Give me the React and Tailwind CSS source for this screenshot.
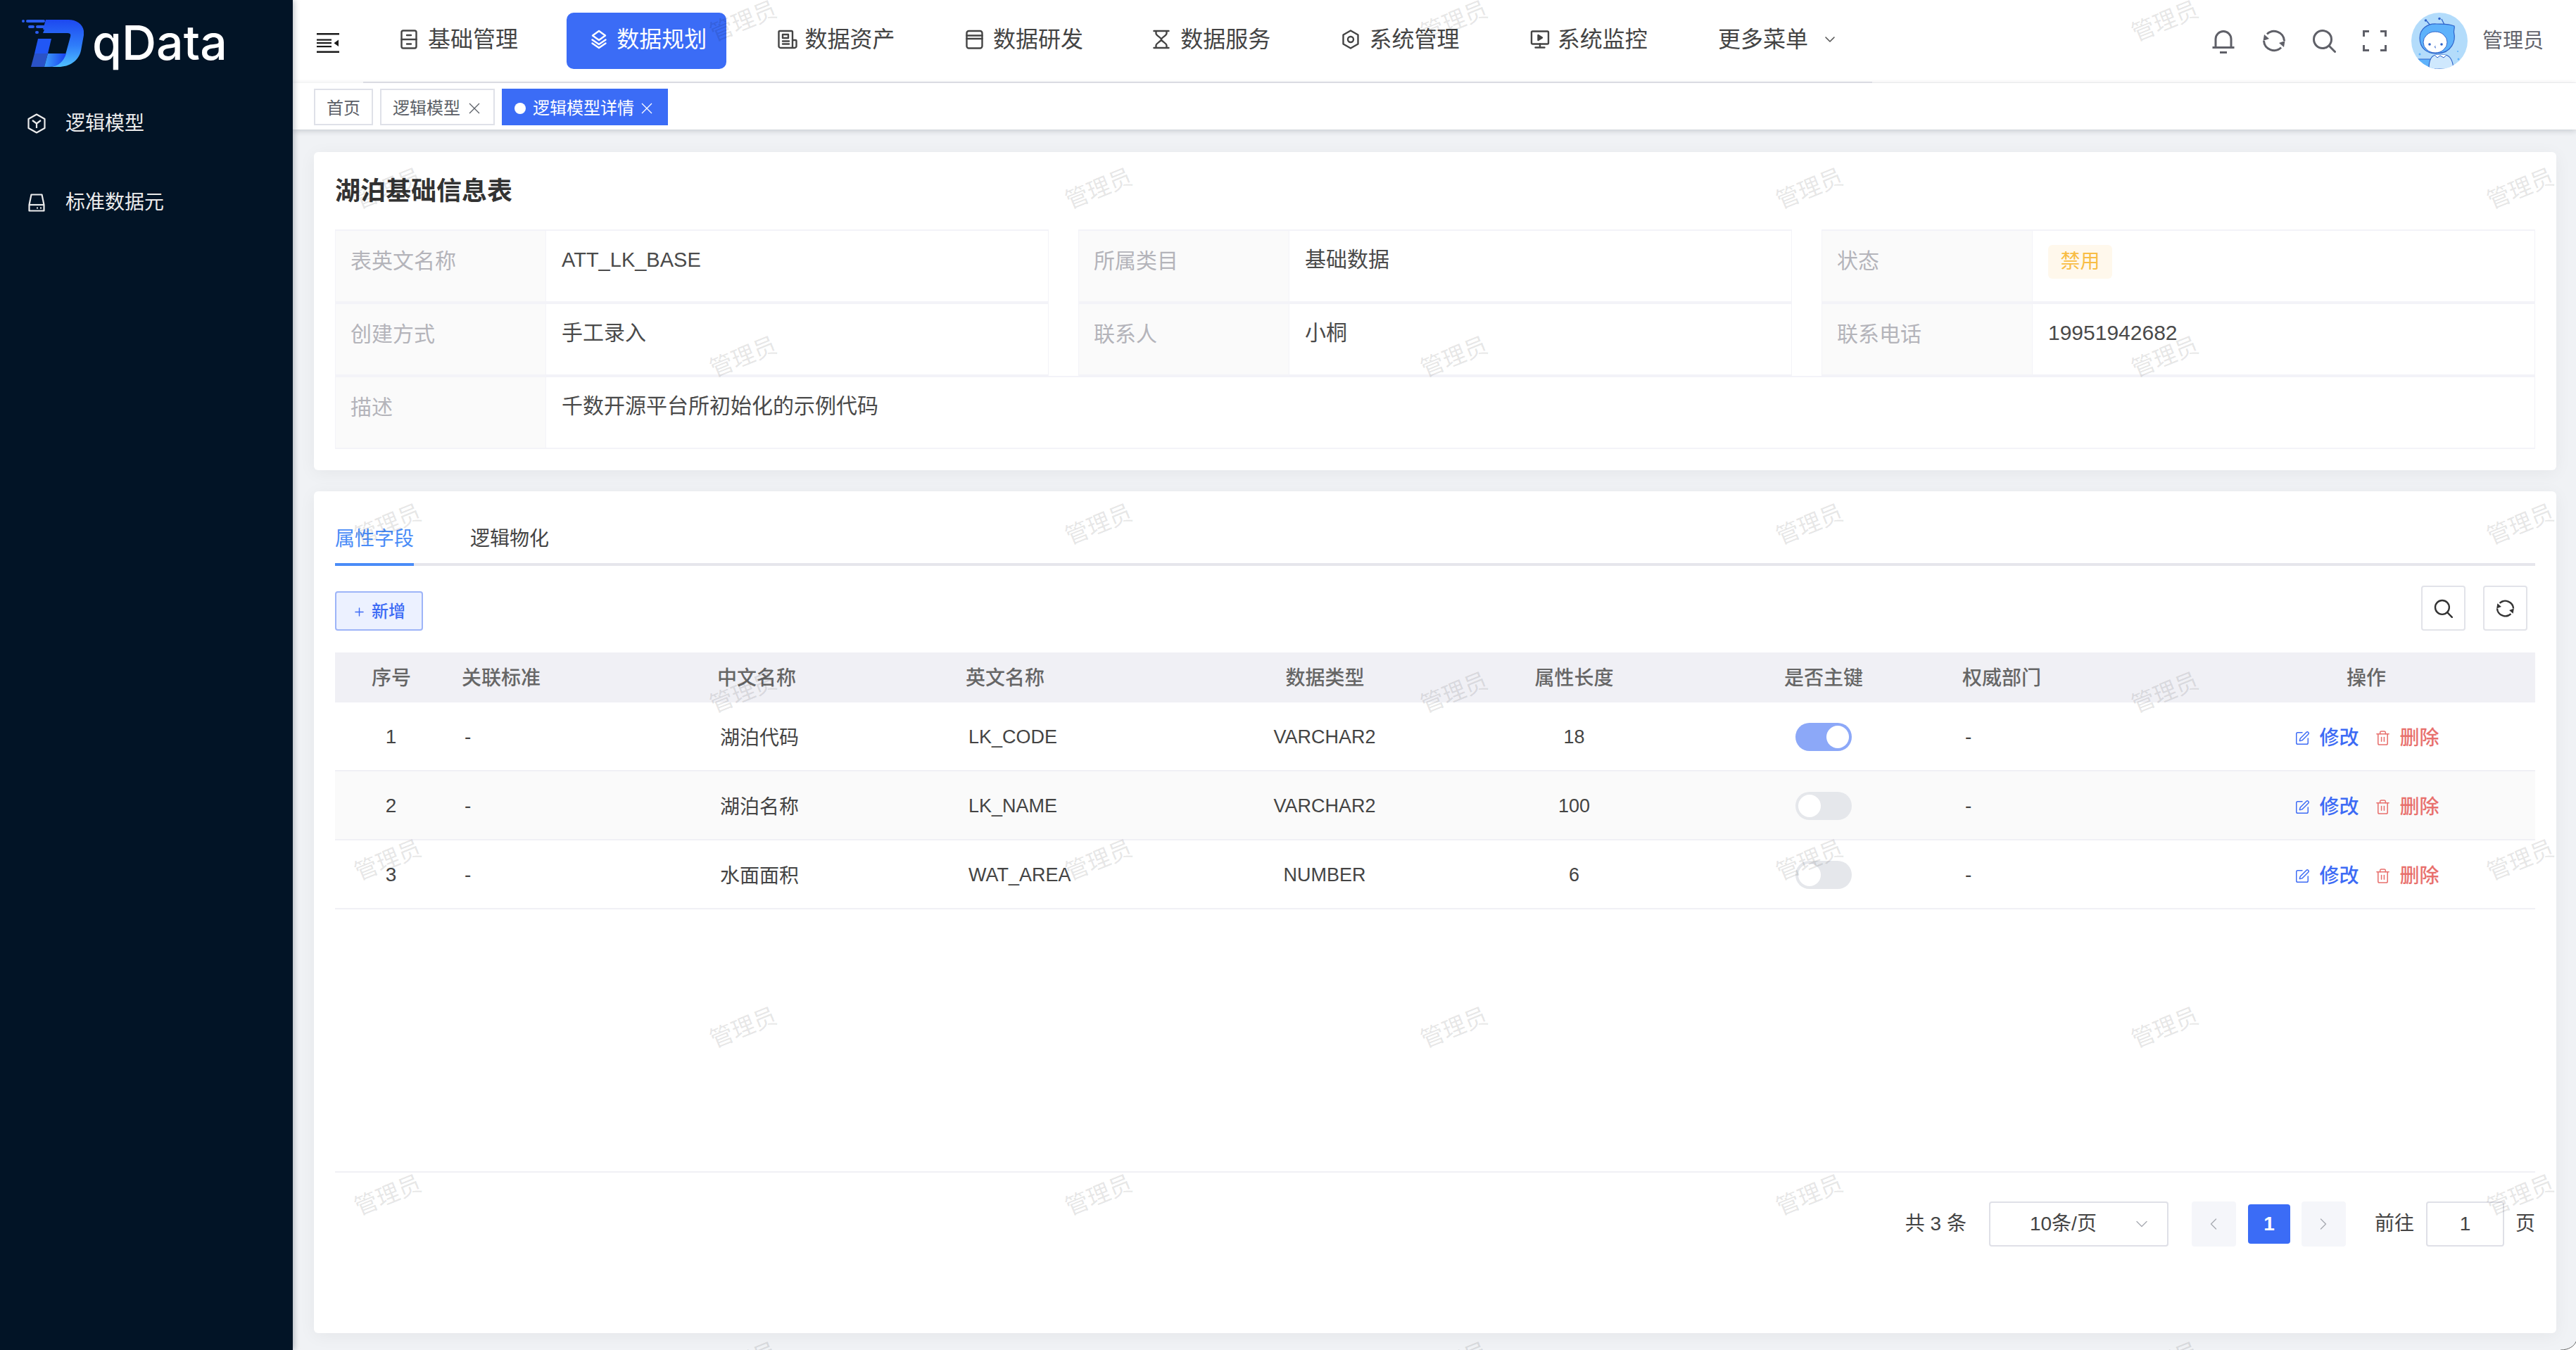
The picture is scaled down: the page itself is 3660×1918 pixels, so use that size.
import React from "react";
import { ChevronDown, ChevronLeft, ChevronRight, Plus, SquarePen, Trash2 } from "lucide-react";

const COLS = "grid grid-cols-[158px_363px_353px_354px_355px_355px_354px_354px_480px] items-center";
const FONT = "[font-family:'Liberation_Sans','Noto_Sans_CJK_SC',sans-serif]";

function Ic({ w = 28, h = 28, vb = "0 0 28 28", sw = 2.4, color = "currentColor", children, className = "" }) {
  return (
    <svg width={w} height={h} viewBox={vb} fill="none" stroke={color} strokeWidth={sw} strokeLinecap="round" strokeLinejoin="round" className={className}>
      {children}
    </svg>
  );
}

const IconBase = () => (
  <Ic w={24} h={28} vb="0 0 24 28">
    <rect x="1.5" y="1.5" width="21" height="25" rx="2.5" />
    <path d="M1.5 14h21M9 8h6M9 20.5h6" />
  </Ic>
);
const IconLayers = () => (
  <Ic w={28} h={28}>
    <path d="M14 2l9 6.5-9 6.5-9-6.5z" />
    <path d="M4.5 14.5L14 21l9.5-6.5" />
    <path d="M4.5 19.5L14 26l9.5-6.5" />
  </Ic>
);
const IconAsset = () => (
  <Ic w={28} h={28}>
    <path d="M21 26H4a2.5 2.5 0 0 1-2.5-2.5v-20A1.5 1.5 0 0 1 3 2h16.5A1.5 1.5 0 0 1 21 3.5V26zm0-11h4.5a1 1 0 0 1 1 1v7.5A2.5 2.5 0 0 1 24 26h-3" />
    <rect x="7" y="7" width="8" height="5" />
    <path d="M7 16.5h9M7 20.5h9" />
  </Ic>
);
const IconDev = () => (
  <Ic w={25} h={28} vb="0 0 25 28">
    <rect x="1.5" y="2" width="22" height="24.5" rx="3" />
    <path d="M1.5 8.5h22M1.5 13h22" />
  </Ic>
);
const IconHour = () => (
  <Ic w={24} h={28} vb="0 0 24 28">
    <path d="M1.5 2h21M1.5 26h21M4.5 2v3.5c0 3 7.5 6 7.5 8.5 0 2.5-7.500 5.500-7.500 8.500V26M19.500 2v3.500c0 3-7.500 6-7.500 8.500 0 2.500 7.500 5.500 7.500 8.500V26" />
  </Ic>
);
const IconHex = () => (
  <Ic w={26} h={28} vb="0 0 26 28">
    <path d="M13 1.500l10.500 6v13L13 26.500l-10.500-6v-13z" />
    <circle cx="13" cy="14" r="4" />
  </Ic>
);
const IconMonitor = () => (
  <Ic w={28} h={28}>
    <rect x="2" y="2.500" width="24" height="18" rx="1.500" />
    <path d="M14 20.500v5M7.500 25.500h13" />
    <path d="M11.500 8l5.500 3.500-5.500 3.500z" fill="currentColor" />
  </Ic>
);
const IconBell = () => (
  <Ic w={34} h={35} vb="0 0 34 35" color="#5f6068" sw={3}>
    <path d="M6 26V14.500a11 11 0 0 1 22 0V26" />
    <path d="M1.500 26.500h31M12 33.500h10" strokeLinecap="butt" />
  </Ic>
);
const IconRefresh = ({ s = 34, color = "#5f6068", sw = 3 }) => (
  <Ic w={s} h={s} vb="0 0 34 34" color={color} sw={sw}>
    <path d="M7 7.500A14.500 14.500 0 0 1 31.500 17" strokeLinecap="butt" />
    <path d="M27 26.500A14.500 14.500 0 0 1 2.500 17" strokeLinecap="butt" />
    <path d="M1.500 17l1.500-9 7 6z" fill={color} stroke="none" />
    <path d="M32.500 17l-1.500 9-7-6z" fill={color} stroke="none" />
  </Ic>
);
const IconSearch = ({ s = 34, color = "#5f6068", sw = 3 }) => (
  <Ic w={s} h={s} vb="0 0 34 34" color={color} sw={sw}>
    <circle cx="15" cy="15" r="12.500" />
    <path d="M24.500 24.500L32.500 32.500" />
  </Ic>
);
const IconFull = () => (
  <Ic w={34} h={30} vb="0 0 34 30" color="#5f6068" sw={3}>
    <path d="M1.500 9V1.500H9M25 1.500h7.500V9M1.500 21v7.500H9M25 28.500h7.500V21" strokeLinecap="butt" strokeLinejoin="miter" />
  </Ic>
);

function Avatar() {
  return (
    <svg width="80" height="80" viewBox="0 0 80 80" className="rounded-full shrink-0">
      <rect width="80" height="80" fill="#b3dcfb" />
      <path d="M0 66h32l3 14H0z" fill="#5eb2fb" stroke="#2f63c9" strokeWidth="1" />
      <path d="M25 80c0-12 3-19 10-20h13c8 1 11 8 12 20z" fill="#cfe8fd" stroke="#2f63c9" strokeWidth="1.200" />
      <path d="M33 60l4 4 4-3 5 3 4-4" fill="#fff" stroke="#2f63c9" strokeWidth="1" />
      <path d="M27 18L22 12M47 17l-4-8" stroke="#2f63c9" strokeWidth="1.300" fill="none" />
      <circle cx="20.500" cy="11" r="1.800" fill="#2f63c9" />
      <circle cx="40" cy="8.500" r="1.800" fill="#2f63c9" />
      <path d="M12 36c0-13 11-21 24-20 8 .5 15-1 25 3 1 3-1 6-.5 9 3 12-3 29-23 30C22 59 12 50 12 36z" fill="#5eb2fb" stroke="#2f63c9" strokeWidth="1.200" />
      <ellipse cx="34" cy="42" rx="17" ry="15" fill="#fff" stroke="#2f63c9" strokeWidth="1" />
      <circle cx="26" cy="45" r="1.800" fill="#2f63c9" />
      <circle cx="43" cy="45" r="1.800" fill="#2f63c9" />
      <path d="M34.500 47c-1.500 1-1.500 3 .5 3" stroke="#2f63c9" strokeWidth="1" fill="none" />
      <circle cx="12" cy="59" r="1.500" fill="#5eb2fb" />
      <circle cx="67" cy="66" r="1.500" fill="#5eb2fb" />
      <circle cx="66" cy="55" r="1" fill="#5eb2fb" />
    </svg>
  );
}

function Logo() {
  return (
    <svg width="88" height="67" viewBox="0 0 88 67" className="shrink-0">
      <defs>
        <linearGradient id="lgA" x1="0" y1="0" x2="0" y2="1">
          <stop offset="0" stopColor="#1d48f0" />
          <stop offset="0.55" stopColor="#2f7dfa" />
          <stop offset="1" stopColor="#4fc0ff" />
        </linearGradient>
        <linearGradient id="lgB" x1="0" y1="0" x2="1" y2="0">
          <stop offset="0" stopColor="#3fa0fb" />
          <stop offset="1" stopColor="#1740ee" />
        </linearGradient>
      </defs>
      <circle cx="2" cy="2" r="2" fill="#2a5df0" />
      <rect x="6" y="0" width="27" height="4" rx="2" fill="#2a5df0" />
      <rect x="9" y="8" width="9" height="4" rx="2" fill="#2a5df0" />
      <rect x="20" y="8" width="15" height="4" rx="2" fill="#2a5df0" />
      <rect x="19" y="16" width="5" height="4" rx="2" fill="#2a5df0" />
      <path d="M34 0H66C80 0 90 9 88 22L84 44C81 58 68 67 52 67H40C52 66 60 58 63 46L69 24C70 20 68 19 65 19H30L32 14H30L34 0Z" fill="url(#lgA)" />
      <path d="M23 27H42L37 48H18Z" fill="#2157f5" />
      <path d="M18 48H37L32 67H13Z" fill="#2a52c6" />
      <path d="M37 48H63C60 58 52 67 40 67H32Z" fill="url(#lgB)" />
    </svg>
  );
}

function Hamburger() {
  return (
    <svg width="32" height="28" viewBox="0 0 32 28" className="shrink-0" fill="#1a1a1a">
      <rect x="0" y="0" width="32" height="2.500" />
      <rect x="0" y="8.500" width="21" height="2.200" />
      <rect x="0" y="13" width="21" height="2.200" />
      <rect x="0" y="18" width="21" height="2.200" />
      <rect x="0" y="25.500" width="32" height="2.500" />
      <path d="M31 9.500v9.500l-6.500-4.700z" />
    </svg>
  );
}

const navItems = [
  ["基础管理", IconBase],
  ["数据规划", IconLayers, true],
  ["数据资产", IconAsset],
  ["数据研发", IconDev],
  ["数据服务", IconHour],
  ["系统管理", IconHex],
  ["系统监控", IconMonitor],
];

const rows = [
  ["1", "湖泊代码", "LK_CODE", "VARCHAR2", "18", true],
  ["2", "湖泊名称", "LK_NAME", "VARCHAR2", "100", false],
  ["3", "水面面积", "WAT_AREA", "NUMBER", "6", false],
];

const wmA = [1056, 2066, 3076];
const wmB = [551, 1561, 2571, 3581];
const wmRows = [
  [30, wmA], [268, wmB], [507, wmA], [745, wmB], [984, wmA], [1222, wmB], [1460, wmA], [1698, wmB], [1936, wmA],
];

function Cell({ label, children }) {
  return (
    <div className="flex flex-1 h-[104px] border-x border-y-2 border-[#f3f3f8]">
      <div className="w-[299px] shrink-0 bg-[#fafafa] border-r border-[#f3f3f8] pl-[21px] pt-[23px] text-[30px] leading-[40px] text-[#b4b4ba]">{label}</div>
      <div className="flex-1 pl-[22px] pt-[21px] text-[30px] leading-[40px] text-[#4a4a4a]">{children}</div>
    </div>
  );
}

export default function App() {
  return (
    <div className={`relative flex w-[3660px] h-[1918px] overflow-hidden bg-[#f0f2f5] ${FONT}`}>
      {/* sidebar */}
      <aside className="relative z-20 w-[416px] shrink-0 bg-[#021426] shadow-[2px_0_8px_rgba(0,21,41,0.25)] flex flex-col">
        <div className="h-[118px] flex items-start pl-[31px] pt-[28px] gap-[12px]">
          <Logo />
          <span className="text-[68px] leading-[72px] font-medium text-white -mt-[4px] [font-family:Inter,sans-serif]">qData</span>
        </div>
        <div className="h-[112px] flex items-center pl-[39px] pt-[3px] gap-[28px] text-[28px] text-[#ececec]">
          <svg width="26" height="29" viewBox="0 0 26 29" fill="none" stroke="#ececec" strokeWidth="2.200" strokeLinejoin="round">
            <path d="M13 1.500L24.500 8v13L13 27.500 1.500 21V8z" />
            <path d="M7 10l6 4.500 6-4.500M13 14.500V21" />
          </svg>
          <span>逻辑模型</span>
        </div>
        <div className="h-[112px] flex items-center pl-[40px] pt-[3px] gap-[29px] text-[28px] text-[#ececec]">
          <svg width="24" height="26" viewBox="0 0 24 26" fill="none" stroke="#ececec" strokeWidth="2.200" strokeLinejoin="round">
            <path d="M4.500 1.500h15L22.500 16v8.500h-21V16z" />
            <path d="M1.500 16h21" />
            <path d="M12 20.500h2M17 20.500h2" />
          </svg>
          <span>标准数据元</span>
        </div>
      </aside>

      {/* main */}
      <div className="flex-1 min-w-0 flex flex-col">
        <header className="h-[118px] flex bg-white">
          <div className="w-[100px] shrink-0 flex pl-[34px] pt-[47px]">
            <Hamburger />
          </div>
          <nav className="w-[2144px] shrink-0 h-full border-b-2 border-[#e4e5ec] flex gap-[40.300px] pl-[22px] pt-[18px]">
            {navItems.map(([t, I, active]) => (
              <div key={t} className={`w-[227px] h-[80px] rounded-[10px] flex items-center pl-[32px] pb-[4px] gap-[11px] text-[32px] ${active ? "bg-[#3b6cf6] text-white" : "text-[#444]"}`}>
                <span className={`flex w-[28px] justify-start shrink-0 ${t === "基础管理" || t === "数据服务" ? "-ml-px" : ""}`}><I /></span>
                <span>{t}</span>
              </div>
            ))}
            <div className="h-[80px] flex items-center pb-[4px] gap-[19px] text-[32px] text-[#444] ml-[32px] whitespace-nowrap">
              <span>更多菜单</span>
              <ChevronDown size={24} strokeWidth={1.6} className="text-[#555]" />
            </div>
          </nav>
          <div className="flex-1 flex items-start justify-end pr-[46px] pt-[18px] border-b border-[#f4f4f6]">
            <div className="flex items-center h-[80px] gap-[37.500px]">
              <IconBell />
              <IconRefresh />
              <IconSearch />
              <IconFull />
            </div>
            <div className="ml-[35px]"><Avatar /></div>
            <span className="ml-[21px] h-[80px] leading-[80px] text-[29px] text-[#63646c]">管理员</span>
          </div>
        </header>

        <div className="relative z-[5] h-[66px] flex items-start gap-[10px] pl-[30px] pt-[8px] bg-white shadow-[0_2px_8px_rgba(0,21,41,0.18)] text-[24px]">
          <div className="h-[52px] w-[84px] pt-[4px] border-2 border-[#dfe1e8] text-[#5a5e66] flex items-center justify-center">首页</div>
          <div className="h-[52px] w-[163px] pt-[4px] border-2 border-[#dfe1e8] text-[#5a5e66] flex items-center pl-[16px] gap-[12px]">
            <span>逻辑模型</span>
            <svg width="16" height="16" viewBox="0 0 16 16" stroke="#5a5e66" strokeWidth="1.300"><path d="M1 1l14 14M15 1L1 15" /></svg>
          </div>
          <div className="h-[52px] w-[236px] pt-[4px] bg-[#3b6cf6] text-white flex items-center pl-[18px]">
            <span className="w-[16px] h-[16px] rounded-full bg-white shrink-0" />
            <span className="ml-[10px]">逻辑模型详情</span>
            <svg className="ml-[10px]" width="16" height="16" viewBox="0 0 16 16" stroke="#fff" strokeWidth="1.300"><path d="M1 1l14 14M15 1L1 15" /></svg>
          </div>
        </div>

        <main className="flex-1 min-h-0 flex flex-col gap-[30px] pl-[30px] pr-[28px] pt-[32px] pb-[24px]">
          {/* info card */}
          <section className="h-[452px] shrink-0 bg-white rounded-[6px] shadow-[0_4px_24px_rgba(0,0,0,0.05)] pl-[30px] pr-[30px] pt-[34px]">
            <h2 className="text-[36px] leading-[44px] font-semibold text-[#333]">湖泊基础信息表</h2>
            <div className="mt-[32px] flex flex-col">
              <div className="flex gap-[42px]">
                <Cell label="表英文名称"><span className="text-[29px]">ATT_LK_BASE</span></Cell>
                <Cell label="所属类目">基础数据</Cell>
                <Cell label="状态">
                  <span className="inline-flex items-center justify-center -mt-px w-[91px] h-[48px] rounded-[6px] bg-[#fff8ec] text-[#f8bd45] text-[28px]">禁用</span>
                </Cell>
              </div>
              <div className="flex gap-[42px]">
                <Cell label="创建方式">手工录入</Cell>
                <Cell label="联系人">小桐</Cell>
                <Cell label="联系电话">19951942682</Cell>
              </div>
              <div className="flex">
                <Cell label="描述">千数开源平台所初始化的示例代码</Cell>
              </div>
            </div>
          </section>

          {/* attrs card */}
          <section className="flex-1 min-h-0 bg-white rounded-[6px] shadow-[0_4px_24px_rgba(0,0,0,0.05)] px-[30px] flex flex-col">
            <div className="h-[106px] shrink-0 border-b-4 border-[#e6e6ec] flex gap-[80px] items-start text-[28px] leading-[40px]">
              <div className="h-[106px] w-[112px] pt-[48px] border-b-4 border-[#4a8cf7] text-[#4a8cf7]">属性字段</div>
              <div className="pt-[48px] text-[#444]">逻辑物化</div>
            </div>

            <div className="h-[123px] shrink-0 flex items-start justify-between pr-[11px]">
              <button className="mt-[36px] h-[56px] w-[125px] pt-[2px] rounded-[4px] border-2 border-[#9db4f8] bg-[#ecf1ff] text-[#3d6bf5] text-[24px] font-medium flex items-center justify-center gap-[8px]">
                <Plus size={19} strokeWidth={1.8} />
                <span>新增</span>
              </button>
              <div className="mt-[28px] flex gap-[25px]">
                <div className="w-[63px] h-[64px] rounded-[4px] border-2 border-[#e2e3e9] flex items-center justify-center"><IconSearch s={27} color="#333" sw={3} /></div>
                <div className="w-[63px] h-[64px] rounded-[4px] border-2 border-[#e2e3e9] flex items-center justify-center"><IconRefresh s={27} color="#333" sw={3} /></div>
              </div>
            </div>

            <div className={`${COLS} h-[71px] pt-[3px] bg-[#f0f0f5] text-[28px] font-medium text-[#666]`}>
              <div className="text-center pl-[2px]">序号</div>
              <div className="pl-[22px]">关联标准</div>
              <div className="pl-[22px]">中文名称</div>
              <div className="pl-[22px]">英文名称</div>
              <div className="text-center pl-[2px]">数据类型</div>
              <div className="text-center">属性长度</div>
              <div className="text-center">是否主键</div>
              <div className="pl-[20px]">权威部门</div>
              <div className="text-center">操作</div>
            </div>

            {rows.map(([n, cn, en, type, len, on], i) => (
              <div key={n} className={`${COLS} h-[98px] pt-[2px] border-b-2 border-[#f0f0f5] text-[#444] ${i === 1 ? "bg-[#fafafa]" : "bg-white"}`}>
                <div className="text-center text-[28px] pl-[1px]">{n}</div>
                <div className="pl-[26px] text-[28px]">-</div>
                <div className="pl-[26px] pt-[3px] text-[28px]">{cn}</div>
                <div className="pl-[26px] text-[27px]">{en}</div>
                <div className="text-center text-[27px] pl-[1px]">{type}</div>
                <div className="text-center text-[27px]">{len}</div>
                <div className="flex justify-center">
                  {on ? (
                    <div className="w-[80px] h-[40px] rounded-full bg-[#8ca8f8] flex items-center justify-end pr-[4px]">
                      <span className="w-[32px] h-[32px] rounded-full bg-white" />
                    </div>
                  ) : (
                    <div className="w-[80px] h-[40px] rounded-full bg-[#e5e7eb] flex items-center pl-[4px]">
                      <span className="w-[32px] h-[32px] rounded-full bg-white" />
                    </div>
                  )}
                </div>
                <div className="pl-[24px] text-[28px]">-</div>
                <div className="flex items-center justify-center text-[28px] font-medium pl-[2px] pt-[3px]">
                  <SquarePen size={22} strokeWidth={1.6} className="text-[#3d6bf5]" />
                  <span className="ml-[13px] text-[#3d6bf5]">修改</span>
                  <Trash2 size={23} strokeWidth={1.6} className="ml-[22px] text-[#e8706d]" />
                  <span className="ml-[13px] text-[#e8706d]">删除</span>
                </div>
              </div>
            ))}

            <div className="flex-1 min-h-0" />

            <footer className="h-[230px] shrink-0 border-t-2 border-[#f0f0f5] flex items-start justify-end pt-[41px] text-[28px] text-[#444]">
              <div className="flex items-center h-[64px] whitespace-nowrap">
                <span>共 3 条</span>
                <div className="ml-[32px] w-[255px] h-[64px] rounded-[4px] border-2 border-[#dfe0e7] flex items-center pl-[56px]">
                  <span>10条/页</span>
                  <ChevronDown size={28} strokeWidth={1.2} className="ml-auto mr-[22px] text-[#a8abb2]" />
                </div>
                <div className="ml-[33px] w-[63px] h-[64px] rounded-[4px] bg-[#f5f6fa] flex items-center justify-center"><ChevronLeft size={28} strokeWidth={1.2} className="text-[#a8abb2]" /></div>
                <div className="ml-[17px] w-[60px] h-[56px] rounded-[4px] bg-[#3b6cf6] text-white font-bold flex items-center justify-center">1</div>
                <div className="ml-[16px] w-[63px] h-[64px] rounded-[4px] bg-[#f5f6fa] flex items-center justify-center"><ChevronRight size={28} strokeWidth={1.2} className="text-[#a8abb2]" /></div>
                <span className="ml-[41px]">前往</span>
                <div className="ml-[17px] w-[111px] h-[64px] rounded-[4px] border-2 border-[#dfe0e7] flex items-center justify-center">1</div>
                <span className="ml-[16px]">页</span>
              </div>
            </footer>
          </section>
        </main>
      </div>

      {/* watermark overlay */}
      <div className="absolute inset-0 z-10 pointer-events-none overflow-hidden">
        {wmRows.flatMap(([y, xs]) =>
          xs.map((x) => (
            <span
              key={`${x}-${y}`}
              className="absolute -translate-x-1/2 -translate-y-1/2 -rotate-[22deg] text-[33px] leading-none whitespace-nowrap text-[rgba(0,0,0,0.11)]"
              style={{ left: x, top: y }}
            >
              管理员
            </span>
          ))
        )}
      </div>

      {/* window corner */}
      <svg className="absolute right-0 bottom-0 z-30" width="22" height="12" viewBox="0 0 22 12">
        <path d="M22 0C20 6 12 12 0 12H22Z" fill="#fff" />
        <path d="M22 0C20 6 12 12 0 12" fill="none" stroke="#666" strokeWidth="1" />
      </svg>
    </div>
  );
}
